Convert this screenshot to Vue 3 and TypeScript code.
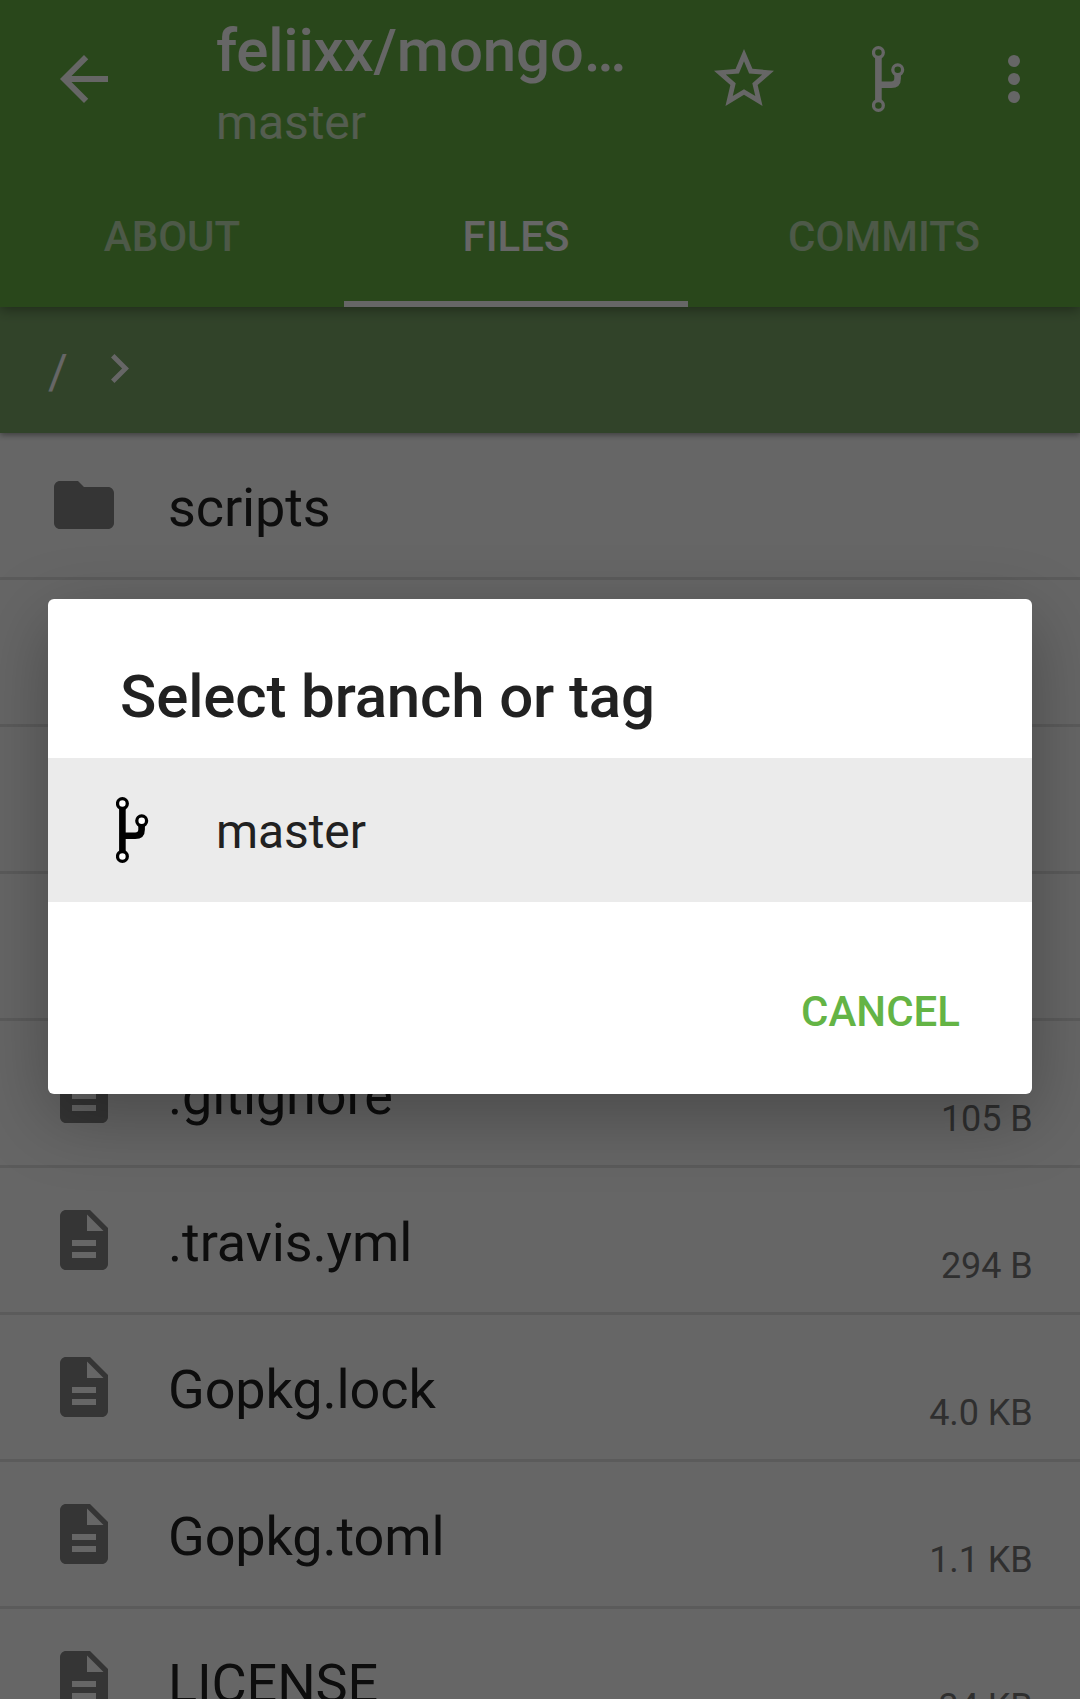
<script setup lang="ts">
import { ref } from 'vue'

interface Entry {
  name: string
  kind: 'dir' | 'file'
  size?: string
}

const tabs = ['ABOUT', 'FILES', 'COMMITS']
const activeTab = ref('FILES')

const entries: Entry[] = [
  { name: 'scripts', kind: 'dir' },
  { name: '', kind: 'dir' },
  { name: '', kind: 'dir' },
  { name: '', kind: 'dir' },
  { name: '.gitignore', kind: 'file', size: '105 B' },
  { name: '.travis.yml', kind: 'file', size: '294 B' },
  { name: 'Gopkg.lock', kind: 'file', size: '4.0 KB' },
  { name: 'Gopkg.toml', kind: 'file', size: '1.1 KB' },
  { name: 'LICENSE', kind: 'file', size: '34 KB' },
]
</script>

<template>
  <div class="screen">
    <header class="appbar">
      <div class="toolbar">
        <svg class="icon back" viewBox="0 0 24 24"><path d="M20 11H7.83l5.59-5.59L12 4l-8 8 8 8 1.41-1.41L7.83 13H20v-2z" /></svg>
        <div class="titles">
          <div class="title">feliixx/mongo…</div>
          <div class="subtitle">master</div>
        </div>
        <svg class="icon star" viewBox="0 0 24 24"><path d="M22 9.24l-7.19-.62L12 2 9.19 8.63 2 9.24l5.46 4.73L5.82 21 12 17.27 18.18 21l-1.63-7.03L22 9.24zM12 15.4l-3.76 2.27 1-4.28-3.32-2.88 4.38-.38L12 6.1l1.71 4.04 4.38.38-3.32 2.88 1 4.28L12 15.4z" /></svg>
        <svg class="branch" viewBox="0 0 33 66">
          <g fill="none" stroke="currentColor">
            <path stroke-width="6.6" d="M6.4 11V55M6.4 38.8H19.2Q25.6 38.8 25.6 32.5V28" />
            <g stroke-width="3.3"><circle cx="6.4" cy="6.6" r="4.9" /><circle cx="25.7" cy="23.8" r="4.9" /><circle cx="6.4" cy="59.4" r="4.9" /></g>
          </g>
        </svg>
        <svg class="icon more" viewBox="0 0 24 24"><circle cx="12" cy="6" r="2" /><circle cx="12" cy="12" r="2" /><circle cx="12" cy="18" r="2" /></svg>
      </div>
      <nav class="tabs">
        <div v-for="t in tabs" :key="t" class="tab" :class="{ active: t === activeTab }" @click="activeTab = t">{{ t }}</div>
      </nav>
    </header>

    <div class="crumbs">
      <span class="root">/</span>
      <svg class="chevron" viewBox="8.59 6 7.41 12"><path d="M10 6L8.59 7.41 13.17 12l-4.58 4.59L10 18l6-6z" /></svg>
    </div>

    <main class="list">
      <div v-for="(e, i) in entries" :key="i" class="row">
        <svg class="icon" viewBox="0 0 24 24">
          <path v-if="e.kind === 'dir'" d="M10 4H4c-1.1 0-1.99.9-1.99 2L2 18c0 1.1.9 2 2 2h16c1.1 0 2-.9 2-2V8c0-1.1-.9-2-2-2h-8l-2-2z" />
          <path v-else d="M14 2H6c-1.1 0-1.99.9-1.99 2L4 20c0 1.1.89 2 1.99 2H18c1.1 0 2-.9 2-2V8l-6-6zm2 16H8v-2h8v2zm0-4H8v-2h8v2zm-3-5V3.500L18.500 9H13z" />
        </svg>
        <span class="name">{{ e.name }}</span>
        <span v-if="e.size" class="size">{{ e.size }}</span>
      </div>
    </main>

    <div class="scrim">
      <section class="dialog">
        <h2>Select branch or tag</h2>
        <div class="option">
          <svg class="branch" viewBox="0 0 33 66">
            <g fill="none" stroke="currentColor">
              <path stroke-width="6.6" d="M6.4 11V55M6.4 38.8H19.2Q25.6 38.8 25.6 32.5V28" />
              <g stroke-width="3.3" fill="#fff"><circle cx="6.4" cy="6.6" r="4.9" /><circle cx="25.7" cy="23.8" r="4.9" /><circle cx="6.4" cy="59.4" r="4.9" /></g>
            </g>
          </svg>
          <span>master</span>
        </div>
        <div class="actions"><button type="button">CANCEL</button></div>
      </section>
    </div>
  </div>
</template>

<style>
body { margin: 0; overflow: hidden; }
</style>

<style scoped>
.screen {
  position: relative;
  width: 1080px;
  height: 1699px;
  overflow: hidden;
  background: #fff;
  font-family: Roboto, "Noto Sans", sans-serif;
  color: #212121;
}
.icon { width: 72px; height: 72px; flex: none; fill: currentColor; }
.branch { width: 33px; height: 66px; flex: none; }

.appbar {
  position: relative;
  z-index: 2;
  height: 307px;
  background: #66b244;
  color: #fff;
  box-shadow: 0 3px 12px rgba(0, 0, 0, 0.36);
}
.toolbar { display: flex; height: 163px; align-items: flex-start; }
.back { margin: 43px 0 0 48px; }
.titles { margin: 16px 0 0 96px; width: 440px; white-space: nowrap; }
.title { font-size: 60px; font-weight: 500; line-height: 70px; letter-spacing: -0.18px; }
.subtitle { margin-top: 9px; font-size: 48px; line-height: 56px; letter-spacing: -0.1px; opacity: 0.7; }
.star { margin: 43px 0 0 52px; }
.toolbar .branch { margin: 46px 0 0 92px; }
.more { margin: 43px 0 0 73px; }
.tabs { display: flex; height: 144px; }
.tab {
  box-sizing: border-box;
  width: 344px;
  height: 144px;
  text-align: center;
  font-size: 42px;
  font-weight: 500;
  line-height: 147px;
  color: rgba(255, 255, 255, 0.6);
}
.tab:last-child { flex: 1; }
.tab.active { color: #fff; border-bottom: 6px solid #fff; }

.crumbs {
  position: relative;
  z-index: 1;
  display: flex;
  height: 126px;
  background: #7ba868;
  color: #fff;
  box-shadow: 0 2px 6px rgba(0, 0, 0, 0.4);
}
.root { width: 63px; padding-left: 48px; font-size: 48px; line-height: 129px; }
.chevron { width: 18px; height: 29px; margin-top: 47px; fill: currentColor; }

.row {
  display: flex;
  align-items: flex-start;
  height: 144px;
  padding: 0 48px;
  border-bottom: 3px solid #e3e3e3;
}
.row .icon { margin-top: 36px; color: #848484; }
.name { flex: 1; margin-left: 48px; font-size: 54px; line-height: 149px; letter-spacing: -0.12px; }
.size { margin: 77px -0.5px 0 0; font-size: 36px; line-height: 42px; letter-spacing: -0.1px; color: #777; }

.scrim {
  position: absolute;
  inset: 0;
  z-index: 3;
  display: flex;
  align-items: flex-start;
  justify-content: center;
  padding-top: 599px;
  background: rgba(0, 0, 0, 0.6);
}
.dialog {
  width: 984px;
  height: 495px;
  border-radius: 6px;
  background: #fff;
  box-shadow: 0 22px 72px rgba(0, 0, 0, 0.29);
}
h2 {
  box-sizing: border-box;
  height: 159px;
  margin: 0;
  padding: 63px 72px 0;
  font-size: 60px;
  font-weight: 500;
  line-height: 70px;
  letter-spacing: -0.15px;
}
.option { display: flex; height: 144px; background: #ebebeb; }
.option .branch { margin: 39px 0 0 68px; color: #000; }
.option span { margin-left: 67px; font-size: 48px; line-height: 147px; letter-spacing: -0.1px; }
.actions { display: flex; justify-content: flex-end; padding: 74px 72px 0 0; }
button {
  padding: 0;
  border: 0;
  background: none;
  font: 500 42px/72px Roboto, sans-serif;
  color: #64b445;
}
</style>
